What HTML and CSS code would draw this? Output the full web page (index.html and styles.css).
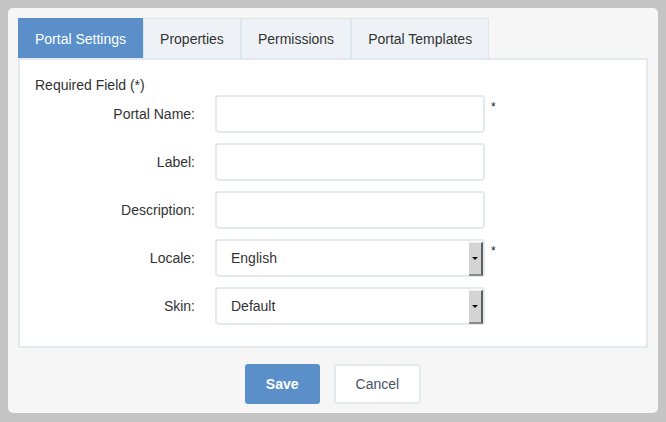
FILE: index.html
```html
<!DOCTYPE html>
<html lang="en">
<head>
    <meta charset="UTF-8">
    <meta name="viewport" content="width=device-width, initial-scale=1.0">
    <title>Portal Settings</title>
    <link rel="stylesheet" href="styles.css">
</head>
<body>
    <div class="dialog">
        <!-- Tabs -->
        <div class="tabs">
            <div class="tab active">Portal Settings</div>
            <div class="tab">Properties</div>
            <div class="tab">Permissions</div>
            <div class="tab">Portal Templates</div>
        </div>

        <!-- Portal Settings panel -->
        <form class="tab-content" id="portalForm">
            <div class="required-note">Required Field (*)</div>
            <div class="form-grid">
                <label for="portalName">Portal Name:</label>
                <input type="text" id="portalName" name="portalName">
                <span class="mandatory">*</span>

                <label for="label">Label:</label>
                <input type="text" id="label" name="label">
                <span></span>

                <label for="description">Description:</label>
                <input type="text" id="description" name="description">
                <span></span>

                <label for="locale">Locale:</label>
                <div class="select-wrap">
                    <select id="locale" name="locale">
                        <option selected>English</option>
                        <option>French</option>
                    </select>
                    <span class="select-btn"></span>
                </div>
                <span class="mandatory">*</span>

                <label for="skin">Skin:</label>
                <div class="select-wrap">
                    <select id="skin" name="skin">
                        <option selected>Default</option>
                    </select>
                    <span class="select-btn"></span>
                </div>
                <span></span>
            </div>
        </form>

        <div class="actions">
            <button type="button" class="btn btn-primary">Save</button>
            <button type="button" class="btn">Cancel</button>
        </div>
    </div>
</body>
</html>
```

FILE: styles.css
```css
body {
    font-family: 'Liberation Sans', Arial, sans-serif;
    font-size: 14px;
    background: #c4c4c4;
    margin: 0;
    padding: 8px;
    height: 422px;
    box-sizing: border-box;
    color: #333;
}

.dialog {
    background: #f6f6f6;
    border-radius: 5px;
    padding: 10px 10px 9px;
    height: 405px;
    box-sizing: border-box;
}

.tabs {
    display: flex;
}

.tab {
    padding: 10px 16px 9px;
    line-height: 20px;
    background: #eef2f6;
    border: 1px solid #dde5ed;
    border-bottom: none;
    color: #333;
}

.tab.active {
    background: #5a8fca;
    border-color: #5a8fca;
    color: #fff;
}

.tab-content {
    background: #fff;
    border: 2px solid #e3e9ef;
    padding: 15px 15px 21px;
    margin: 0;
}

.required-note {
    line-height: 20px;
}

.form-grid {
    display: grid;
    grid-template-columns: 160px 270px auto;
    column-gap: 20px;
    row-gap: 10px;
    align-items: center;
}

.form-grid label {
    text-align: right;
}

.form-grid input,
.form-grid select {
    width: 100%;
    height: 38px;
    padding: 0 14px;
    border: 2px solid #e4e9ef;
    border-radius: 4px;
    box-sizing: border-box;
    font-family: inherit;
    font-size: 14px;
    color: #333;
    background: #fff;
    outline: none;
}

.form-grid select {
    appearance: none;
    -webkit-appearance: none;
}

.mandatory {
    align-self: start;
    margin-left: -14px;
    margin-top: 6px;
    font-size: 12px;
    line-height: 12px;
    color: #222;
}

.select-wrap {
    position: relative;
    height: 38px;
}

.select-btn {
    position: absolute;
    top: 3px;
    right: 2px;
    width: 12px;
    height: 31px;
    background: #d4d4d4;
    border-right: 2px solid #5e5e5e;
    border-bottom: 2px solid #8a8a8a;
    border-top: 1px solid #ececec;
    pointer-events: none;
}

.select-btn::after {
    content: '';
    position: absolute;
    left: 3px;
    top: 14px;
    border-left: 3px solid transparent;
    border-right: 3px solid transparent;
    border-top: 3px solid #111;
}

.actions {
    display: flex;
    justify-content: center;
    gap: 14px;
    margin-top: 16px;
}

.btn {
    height: 40px;
    padding: 0 20px;
    border: 2px solid #e4e9ef;
    border-radius: 3px;
    background: #fff;
    color: #4b5262;
    font-family: inherit;
    font-size: 14px;
    cursor: pointer;
}

.btn-primary {
    background: #5a8fca;
    border-color: #5a8fca;
    color: #fff;
    font-weight: bold;
    padding: 0 19px;
}
```
